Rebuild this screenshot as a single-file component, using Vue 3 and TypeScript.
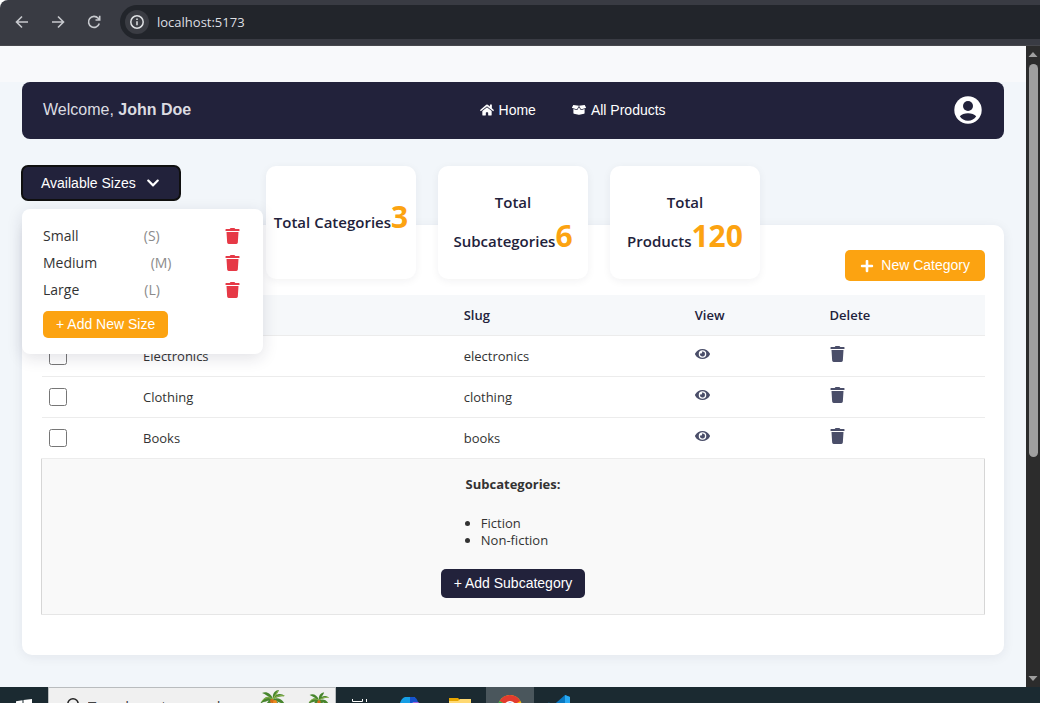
<script setup lang="ts">
import { ref } from 'vue'

interface Size { name: string; code: string }
interface Category { name: string; slug: string; checked: boolean; subcategories: string[] }
interface Stat { label: string; value: number }

const address = ref('localhost:5173')
const taskSearch = ref('')
const menuOpen = ref(true)

const sizes = ref<Size[]>([
  { name: 'Small', code: 'S' },
  { name: 'Medium', code: 'M' },
  { name: 'Large', code: 'L' },
])

const stats: Stat[] = [
  { label: 'Total Categories', value: 3 },
  { label: 'Total Subcategories', value: 6 },
  { label: 'Total Products', value: 120 },
]

const categories = ref<Category[]>([
  { name: 'Electronics', slug: 'electronics', checked: false, subcategories: [] },
  { name: 'Clothing', slug: 'clothing', checked: false, subcategories: [] },
  { name: 'Books', slug: 'books', checked: false, subcategories: ['Fiction', 'Non-fiction'] },
])

const trashPath = 'M432 32H312l-9.4-18.7A24 24 0 0 0 281.1 0H166.8a23.72 23.72 0 0 0-21.4 13.3L136 32H16A16 16 0 0 0 0 48v32a16 16 0 0 0 16 16h416a16 16 0 0 0 16-16V48a16 16 0 0 0-16-16zM53.2 467a48 48 0 0 0 47.9 45h245.8a48 48 0 0 0 47.9-45L416 128H32z'
const eyePath = 'M572.52 241.4C518.29 135.59 410.93 64 288 64S57.68 135.64 3.48 241.41a32.35 32.35 0 0 0 0 29.19C57.71 376.41 165.07 448 288 448s230.32-71.64 284.52-177.41a32.35 32.35 0 0 0 0-29.19zM288 400a144 144 0 1 1 144-144 143.93 143.93 0 0 1-144 144zm0-240a95.31 95.31 0 0 0-25.31 3.79 47.85 47.85 0 0 1-66.9 66.9A95.78 95.78 0 1 0 288 160z'

function removeSize(index: number) {
  sizes.value.splice(index, 1)
}
function removeCategory(index: number) {
  categories.value.splice(index, 1)
}
</script>

<template>
  <div class="window">
    <header class="browser-bar">
      <button class="tool" aria-label="Back">
        <svg viewBox="0 0 16 16"><path d="M14 8H3M8 2.500 2.500 8 8 13.500" /></svg>
      </button>
      <button class="tool" aria-label="Forward">
        <svg viewBox="0 0 16 16"><path d="M2 8h11M8 2.500 13.500 8 8 13.500" /></svg>
      </button>
      <button class="tool" aria-label="Reload">
        <svg viewBox="0 0 16 16"><path d="M13.300 9.500A5.500 5.500 0 1 1 12.200 4.300L13.500 5.800M13.700 1.800V6H9.500" /></svg>
      </button>
      <div class="address">
        <button class="site-info" aria-label="Site information">
          <svg viewBox="0 0 16 16"><circle cx="8" cy="8" r="6.200" /><path d="M8 7.200V11.300M8 4.600V6" /></svg>
        </button>
        <input v-model="address" type="text" aria-label="Address" spellcheck="false" />
      </div>
    </header>

    <div class="viewport">
      <main class="page">
        <nav class="navbar">
          <p class="welcome">Welcome, <strong>John Doe</strong></p>
          <div class="links">
            <a href="#home">
              <svg viewBox="0 0 576 512"><path d="M280.37 148.26L96 300.11V464a16 16 0 0 0 16 16l112.06-.29a16 16 0 0 0 15.92-16V368a16 16 0 0 1 16-16h64a16 16 0 0 1 16 16v95.64a16 16 0 0 0 16 16.05L464 480a16 16 0 0 0 16-16V300L295.67 148.26a12.19 12.19 0 0 0-15.3 0zM571.6 251.47L488 182.56V44.05a12 12 0 0 0-12-12h-56a12 12 0 0 0-12 12v72.61L318.47 43a48 48 0 0 0-61 0L4.34 251.47a12 12 0 0 0-1.6 16.9l25.5 31A12 12 0 0 0 45.15 301l235.22-193.74a12.19 12.19 0 0 1 15.3 0L530.9 301a12 12 0 0 0 16.9-1.6l25.5-31a12 12 0 0 0-1.7-16.93z" /></svg>
              Home
            </a>
            <a href="#products">
              <svg viewBox="0 0 640 512"><path d="M425.7 256c-16.9 0-32.8-9-41.4-23.4L320 126l-64.2 106.6c-8.7 14.5-24.6 23.5-41.5 23.5-4.5 0-9-.6-13.3-1.9L64 215v178c0 14.7 10 27.5 24.2 31l216.2 54.1c10.2 2.5 20.9 2.5 31 0L551.8 424c14.2-3.6 24.2-16.4 24.2-31V215l-137 39.1c-4.3 1.3-8.8 1.9-13.3 1.9zm212.6-112.2L586.8 41c-3.1-6.2-9.8-9.8-16.7-8.9L320 64l91.7 152.1c3.8 6.3 11.4 9.3 18.5 7.3l197.9-56.5c9.9-2.9 14.7-13.9 10.2-23.1zM53.2 41L1.7 143.8c-4.6 9.2.3 20.2 10.1 23l197.9 56.5c7.1 2 14.7-1 18.500-7.300L320 64 69.800 32.100c-6.900-.8-13.500 2.700-16.600 8.900z" /></svg>
              All Products
            </a>
          </div>
          <button class="profile" aria-label="Profile">
            <svg viewBox="0 0 28 28">
              <circle cx="14" cy="14" r="13.700" fill="#fff" />
              <circle cx="14" cy="10" r="5" fill="#22223b" />
              <path d="M5.800 20.300C7.600 18.200 10.600 17.200 14 17.200s6.400 1 8.200 3.100C20.400 23.200 17.500 24.800 14 24.800s-6.400-1.600-8.200-4.500z" fill="#22223b" />
            </svg>
          </button>
        </nav>

        <section class="overview">
          <div class="sizes">
            <button class="sizes-toggle" :aria-expanded="menuOpen" @click="menuOpen = !menuOpen">
              Available Sizes
              <svg viewBox="0 0 448 512"><path d="M207.029 381.476L12.686 187.132c-9.373-9.373-9.373-24.569 0-33.941l22.667-22.667c9.357-9.357 24.522-9.375 33.901-.04L224 284.505l154.745-154.021c9.379-9.335 24.544-9.317 33.901.04l22.667 22.667c9.373 9.373 9.373 24.569 0 33.941L240.971 381.476c-9.373 9.372-24.569 9.372-33.942 0z" /></svg>
            </button>
            <div v-if="menuOpen" class="sizes-menu">
              <ul>
                <li v-for="(size, i) in sizes" :key="size.code">
                  <span>{{ size.name }}</span>
                  <span class="code">({{ size.code }})</span>
                  <button class="icon red" :aria-label="'Delete ' + size.name" @click="removeSize(i)">
                    <svg viewBox="0 0 448 512"><path :d="trashPath" /></svg>
                  </button>
                </li>
              </ul>
              <button class="add-size">+ Add New Size</button>
            </div>
          </div>
          <div class="stats">
            <p v-for="stat in stats" :key="stat.label" class="stat">
              <span>{{ stat.label }}<b>{{ stat.value }}</b></span>
            </p>
          </div>
        </section>

        <section class="panel">
          <div class="actions">
            <button class="new-category">
              <svg viewBox="0 0 448 512"><path d="M416 208H272V64c0-17.67-14.33-32-32-32h-32c-17.67 0-32 14.33-32 32v144H32c-17.67 0-32 14.33-32 32v32c0 17.67 14.33 32 32 32h144v144c0 17.67 14.33 32 32 32h32c17.67 0 32-14.33 32-32V304h144c17.67 0 32-14.33 32-32v-32c0-17.67-14.33-32-32-32z" /></svg>
              New Category
            </button>
          </div>
          <table>
            <colgroup>
              <col class="c-check" /><col class="c-name" /><col class="c-slug" /><col class="c-view" /><col />
            </colgroup>
            <thead>
              <tr><th></th><th></th><th>Slug</th><th>View</th><th>Delete</th></tr>
            </thead>
            <tbody>
              <template v-for="(cat, i) in categories" :key="cat.slug">
                <tr>
                  <td class="check"><input v-model="cat.checked" type="checkbox" :aria-label="'Select ' + cat.name" /></td>
                  <td>{{ cat.name }}</td>
                  <td>{{ cat.slug }}</td>
                  <td>
                    <button class="icon" :aria-label="'View ' + cat.name"><svg viewBox="0 0 576 512"><path :d="eyePath" /></svg></button>
                  </td>
                  <td>
                    <button class="icon" :aria-label="'Delete ' + cat.name" @click="removeCategory(i)"><svg viewBox="0 0 448 512"><path :d="trashPath" /></svg></button>
                  </td>
                </tr>
                <tr v-if="cat.subcategories.length">
                  <td colspan="5" class="details">
                    <div class="details-body">
                      <strong>Subcategories:</strong>
                      <ul>
                        <li v-for="sub in cat.subcategories" :key="sub">{{ sub }}</li>
                      </ul>
                      <button class="add-sub">+ Add Subcategory</button>
                    </div>
                  </td>
                </tr>
              </template>
            </tbody>
          </table>
        </section>
      </main>

      <div class="scrollbar" aria-hidden="true">
        <svg viewBox="0 0 14 18"><path d="M7 6 11.500 11h-9z" /></svg>
        <div class="track"><div class="thumb"></div></div>
        <svg viewBox="0 0 14 18"><path d="M7 12 2.500 7h9z" /></svg>
      </div>
    </div>

    <footer class="taskbar">
      <button class="start" aria-label="Start">
        <svg viewBox="0 0 48 40"><path d="M16 14.200 22.500 13.200V20H16zM23.500 13 32 12v8h-8.500zM16 21h6.500v6.800L16 26.800zM23.500 21H32v8l-8.500-1.200z" fill="#fff" /></svg>
      </button>
      <label class="search">
        <svg class="lens" viewBox="0 0 20 20"><circle cx="10" cy="7" r="5.200" /><path d="M6.300 10.800 2 15.500" /></svg>
        <input v-model="taskSearch" type="text" placeholder="Type here to search" aria-label="Type here to search" />
        <svg class="palm" viewBox="0 0 28 36">
          <path d="M13 11C12 18 10 27 9 36h8C17 27 16 18 15 11z" fill="#a5692b" />
          <path d="M14 10C10 6 5 7 1 15 5 12 7 13 8 12c1 0 3-1 6-2zM14 10C12 4 7 2 3 4c3 1 7 4 11 6zM14 10C13 5 16 1 20 1c-1 3-3 5-6 9zM14 10c3-6 8-6 12-3-4 0-8 1-12 3zM14 10c5-2 10 0 12 6-3-2-8-3-12-6zM14 10c-5 1-7 4-7 9 2-3 5-4 7-9zM14 10c4 1 7 5 6 9-2-3-5-4-6-9z" fill="#47852d" />
          <path d="M14 10C10 8 6 8 3 12M14 10c4-3 7-4 11-3M14 10c2-3 3-5 5-8" stroke="#94b950" fill="none" />
          <circle cx="13" cy="12" r="2" fill="#d76b18" /><circle cx="16" cy="13" r="2" fill="#ee8b22" />
        </svg>
        <svg class="palm small" viewBox="0 0 28 36">
          <path d="M13 11C12 18 10 27 9 36h8C17 27 16 18 15 11z" fill="#a5692b" />
          <path d="M14 10C10 6 5 7 1 15 5 12 7 13 8 12c1 0 3-1 6-2zM14 10C12 4 7 2 3 4c3 1 7 4 11 6zM14 10C13 5 16 1 20 1c-1 3-3 5-6 9zM14 10c3-6 8-6 12-3-4 0-8 1-12 3zM14 10c5-2 10 0 12 6-3-2-8-3-12-6zM14 10c-5 1-7 4-7 9 2-3 5-4 7-9zM14 10c4 1 7 5 6 9-2-3-5-4-6-9z" fill="#47852d" />
          <path d="M14 10C10 8 6 8 3 12M14 10c4-3 7-4 11-3" stroke="#94b950" fill="none" />
          <circle cx="14" cy="12" r="2" fill="#d76b18" />
        </svg>
      </label>
      <div class="apps">
        <button aria-label="Task view">
          <svg viewBox="0 0 48 40"><path d="M16.500 12v2.500h10V12M30.500 12v3M16.500 17.500h10v8h-10zM30.500 18v8" fill="none" stroke="#fff" /></svg>
        </button>
        <button aria-label="Copilot">
          <svg viewBox="0 0 48 40"><path d="M19 10h10l-3 10H13c1-6 3-9 6-10z" fill="#169ee5" /><path d="M24 10h3c3 0 4 2 5 5h-4c-2 0-3 1-4 4z" fill="#1652cc" /><path d="M27 15h4c3 0 3 2 2 6l-2 8h-7z" fill="#a264d9" /></svg>
        </button>
        <button aria-label="File Explorer">
          <svg viewBox="0 0 48 40"><path d="M13 11h9l2 2h11v15H13z" fill="#e8a600" /><path d="M13 14h9l2-2h11v16H13z" fill="#ffd972" /></svg>
        </button>
        <button class="active" aria-label="Chrome">
          <svg viewBox="0 0 48 40"><circle cx="24" cy="20" r="12" fill="#fbc116" /><path d="M24 20 13.600 14a12 12 0 0 1 20.800 0z" fill="#e33b2e" /><path d="M24 20 13.600 14A12 12 0 0 0 24 32z" fill="#29a853" /><circle cx="24" cy="20" r="6" fill="#fff" /><circle cx="24" cy="20" r="4.500" fill="#4285f4" /></svg>
        </button>
        <button aria-label="Visual Studio Code">
          <svg viewBox="0 0 48 40"><path d="M29 8 17 18.500 13 15.500 11 16.500v7l2 1 4-3L29 32l5-2V10z" fill="#0a79c2" /><path d="M29 8v24l5-2V10z" fill="#29a9f2" /></svg>
        </button>
      </div>
    </footer>
  </div>
</template>

<style>
body { margin: 0; }
</style>

<style scoped>
* { box-sizing: border-box; }
button { font-family: "Liberation Sans", Arial, sans-serif; font-size: 14px; line-height: 17px; border: 0; padding: 0; cursor: pointer; background: none; color: #fff; }
svg { display: block; flex: none; }
ul, p { margin: 0; padding: 0; }

.window { display: flex; flex-direction: column; height: 100vh; overflow: hidden; font-family: "Segoe UI", "Open Sans", sans-serif; color: #333; }

.browser-bar { flex: none; display: flex; align-items: center; height: 46px; padding: 0 0 2px 14px; background: #393b43; border-bottom: 1px solid #47484d; border-top-left-radius: 8px; }
.tool { width: 16px; margin-right: 20px; }
.tool svg, .site-info svg { width: 16px; height: 16px; fill: none; stroke: #c7c9ce; stroke-width: 1.600; }
.address { flex: 1; display: flex; align-items: center; gap: 8px; height: 34px; margin-left: -2px; padding-left: 5px; background: #22252b; border-radius: 17px 0 0 17px; }
.site-info { display: grid; place-items: center; width: 24px; height: 24px; border-radius: 50%; background: #3a3c43; }
.site-info svg { stroke: #dfe1e4; stroke-width: 1.500; }
.address input { flex: 1; min-width: 0; padding: 0; border: 0; outline: 0; background: none; color: #dddfe2; font: 13px/20px "Segoe UI", "Open Sans", sans-serif; }

.viewport { flex: 1; min-height: 0; display: flex; }
.page { flex: 1; min-width: 0; overflow: hidden; padding: 36px 22px 0; background: linear-gradient(#f8f9fb 36px, #f2f6fa 36px); }

.navbar { display: flex; justify-content: space-between; align-items: center; height: 57px; padding: 0 22px 2px 21px; border-radius: 8px; background: #22223b; color: #fff; font: 14px/20px "Liberation Sans", Arial, sans-serif; }
.welcome { font-size: 16px; color: #dcdce1; }
.links { display: flex; gap: 36px; }
.links a { display: flex; align-items: center; gap: 5px; color: #fff; text-decoration: none; }
.links svg { width: 14px; height: 14px; fill: #fff; }
.profile svg { width: 28px; height: 28px; }

.overview { position: relative; z-index: 1; display: grid; grid-template-columns: 1fr auto 1fr; align-items: start; margin-top: 27px; }
.sizes { position: relative; justify-self: start; }
.sizes-toggle { display: flex; align-items: center; gap: 10px; height: 34px; padding: 0 20px 0 19px; border-radius: 6px; outline: 2px solid #101010; outline-offset: -1px; background: #22223b; }
.sizes-toggle svg { width: 14px; height: 14px; fill: #fff; }
.sizes-menu { position: absolute; z-index: 2; top: 43px; left: 0; width: 241px; padding: 13px 23px 16px 21px; border-radius: 8px; background: #fff; box-shadow: 0 4px 16px rgba(34, 34, 59, 0.13); font-size: 14px; }
.sizes-menu ul { list-style: none; }
.sizes-menu li { display: flex; align-items: center; justify-content: space-between; height: 27px; }
.code { color: #8b8b8b; }
.icon { display: block; }
.icon svg { width: 15px; height: 16px; fill: #4a4e69; }
.red svg { fill: #e63946; }
.add-size { height: 27px; margin-top: 8px; padding: 0 13px; border-radius: 5px; background: #fca311; }

.stats { display: flex; gap: 22px; }
.stat { display: grid; place-items: center; width: 150px; height: 113px; padding: 0 6px 3px; border-radius: 10px; background: #fff; box-shadow: 0 2px 8px rgba(34, 34, 59, 0.06); color: #22223b; font-size: 15px; font-weight: 600; line-height: 38px; text-align: center; }
.stat b { color: #fca311; font-size: 30px; font-weight: 700; line-height: 30px; }

.panel { margin-top: -54px; padding: 25px 19px 40px; border-radius: 10px; background: #fff; box-shadow: 0 2px 12px rgba(34, 34, 59, 0.07); }
.actions { display: flex; justify-content: flex-end; margin-bottom: 14px; }
.new-category { display: flex; align-items: center; gap: 7px; height: 31px; padding: 0 15px; border-radius: 5px; background: #fca311; }
.new-category svg { width: 14px; height: 14px; fill: #fff; }

table { width: 100%; border-collapse: collapse; table-layout: fixed; font-size: 13px; line-height: 18px; }
.c-check { width: 9.500%; }
.c-name { width: 34%; }
.c-slug { width: 24.500%; }
.c-view { width: 14.300%; }
th { height: 40px; padding: 0 12px; background: #f6f8fa; color: #22223b; font-weight: 600; text-align: left; border-bottom: 1px solid #ececec; }
td { height: 41px; padding: 0 12px; border-bottom: 1px solid #ececec; }
td .icon { margin-bottom: 4px; }
.check { padding: 0 7px; }
.check input { display: block; width: 18px; height: 18px; margin: 0; }
.details { padding: 0; border: 1px solid #d6d6d6; border-top-color: #ececec; border-bottom-color: #e6e6e6; background: #f9f9f9; }
.details-body { display: flex; flex-direction: column; align-items: center; padding: 16px 0; }
.details ul { margin: 22px 0 20px; padding-left: 3px; line-height: 17px; }
.add-sub { height: 29px; padding: 0 13px; border-radius: 5px; background: #22223b; }

.scrollbar { flex: none; display: flex; flex-direction: column; width: 14px; background: #2c2c2c; }
.scrollbar svg { width: 14px; height: 18px; fill: #9f9f9f; }
.track { flex: 1; padding: 0 2px 0 3px; }
.thumb { height: 65%; border-radius: 5px; background: #9f9f9f; }

.taskbar { flex: none; display: flex; align-items: flex-start; height: 16px; overflow: hidden; background: #1b2a31; }
.start svg, .apps svg { width: 48px; height: 40px; }
.search { display: flex; align-items: center; width: 288px; height: 40px; padding: 0 4px 0 14px; border: 1px solid #b9bcbe; background: #f0f0f0; }
.lens { width: 20px; height: 20px; fill: none; stroke: #222; stroke-width: 1.500; }
.search input { flex: 1; min-width: 0; margin-left: 5px; padding: 0 0 2px; border: 0; outline: 0; background: none; font: 15px/20px "Segoe UI", "Open Sans", sans-serif; }
.search input::placeholder { color: #444; }
.palm { width: 28px; height: 36px; margin-left: 16px; }
.small { width: 24px; height: 32px; margin-left: 20px; }
.apps { display: flex; gap: 2px; }
.active { background: #4a565c; }
</style>
